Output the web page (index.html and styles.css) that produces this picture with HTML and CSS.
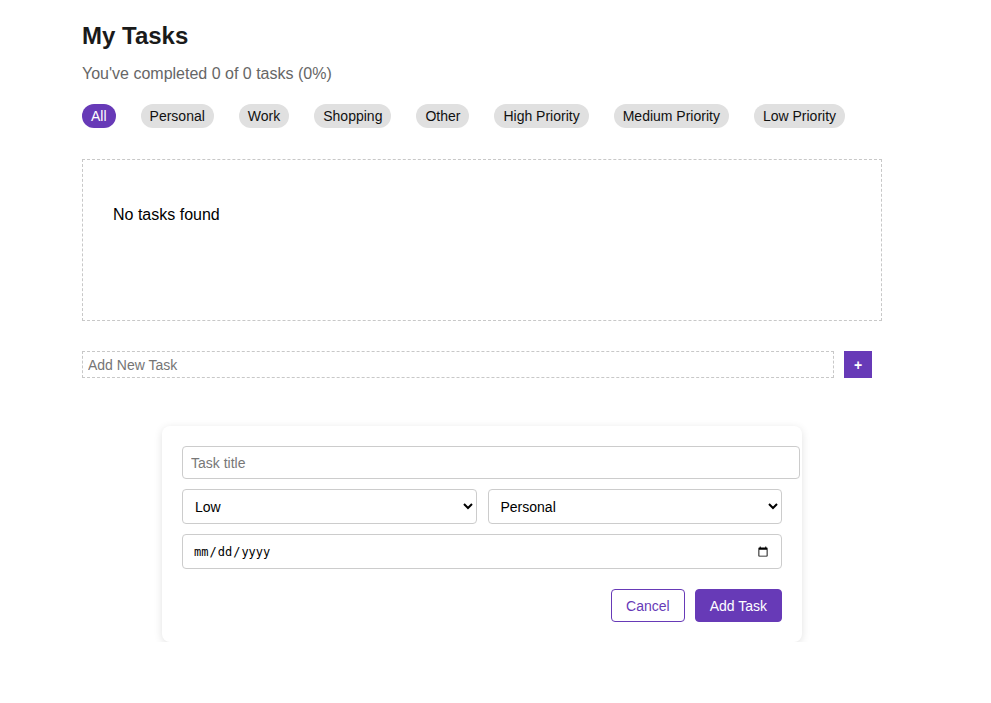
FILE: index.html
```html
<!DOCTYPE html>
<html lang="en">
<head>
<meta charset="utf-8">
<title>My Tasks</title>
<link rel="stylesheet" href="styles.css">
</head>
<body>
<div class="app">
  <h1 class="title">My Tasks</h1>
  <p class="summary">You've completed 0 of 0 tasks (0%)</p>
  <div class="filters">
    <button class="chip active">All</button>
    <button class="chip">Personal</button>
    <button class="chip">Work</button>
    <button class="chip">Shopping</button>
    <button class="chip">Other</button>
    <button class="chip">High Priority</button>
    <button class="chip">Medium Priority</button>
    <button class="chip">Low Priority</button>
  </div>
  <div class="task-list">
    <p class="empty">No tasks found</p>
  </div>
  <div class="add-row">
    <input class="add-input" type="text" placeholder="Add New Task">
    <button class="add-btn">+</button>
  </div>
  <div class="form-card">
    <input class="title-input" type="text" placeholder="Task title">
    <div class="select-row">
      <select class="field">
        <option>Low</option>
        <option>Medium</option>
        <option>High</option>
      </select>
      <select class="field">
        <option>Personal</option>
        <option>Work</option>
        <option>Shopping</option>
        <option>Other</option>
      </select>
    </div>
    <input class="field date-field" type="date">
    <div class="actions">
      <button class="btn btn-outline">Cancel</button>
      <button class="btn btn-primary">Add Task</button>
    </div>
  </div>
</div>
</body>
</html>
```

FILE: styles.css
```css
* { box-sizing: border-box; }
body {
  margin: 0;
  font-family: "Liberation Sans", Arial, sans-serif;
  color: #111;
  background: #fff;
}
.app {
  width: 800px;
  margin-left: 82px;
  padding-top: 22px;
}
.title {
  margin: 0;
  font-size: 24px;
  line-height: 28px;
  font-weight: 700;
  color: #1a1a1a;
}
.summary {
  margin: 15px 0 0;
  font-size: 16px;
  line-height: 18px;
  color: #666;
}
.filters {
  display: flex;
  gap: 25px;
  margin-top: 21px;
}
.chip {
  font-family: "Liberation Sans", Arial, sans-serif;
  font-size: 14px;
  line-height: 16px;
  padding: 4px 9px;
  border: 0;
  border-radius: 12px;
  background: #e0e0e0;
  color: #111;
}
.chip.active {
  background: #673ab7;
  color: #fff;
}
.task-list {
  margin-top: 31px;
  border: 1px dashed #c8c8c8;
  padding: 30px;
  height: 162px;
}
.empty {
  margin: 16px 0 0;
  font-size: 16px;
  line-height: 18px;
  color: #000;
}
.add-row {
  display: flex;
  gap: 10px;
  margin-top: 30px;
  width: 790px;
}
.add-input {
  flex: 1;
  height: 27px;
  border: 1px dashed #c8c8c8;
  padding: 0 5px;
  font-family: "Liberation Sans", Arial, sans-serif;
  font-size: 14px;
  outline: none;
}
.add-input::placeholder { color: #757575; }
.add-btn {
  width: 28px;
  height: 27px;
  border: 0;
  padding: 0;
  background: #673ab7;
  color: #fff;
  font-size: 14px;
  font-weight: 700;
  font-family: "Liberation Sans", Arial, sans-serif;
}
.form-card {
  width: 640px;
  margin: 48px 0 0 80px;
  padding: 20px;
  background: #fff;
  border-radius: 8px;
  box-shadow: 0 2px 8px rgba(0, 0, 0, 0.12);
}
.title-input {
  box-sizing: content-box;
  display: block;
  width: 600px;
  height: 17px;
  padding: 7px 8px;
  border: 1px solid #ccc;
  border-radius: 4px;
  font-family: "Liberation Sans", Arial, sans-serif;
  font-size: 14px;
}
.title-input::placeholder { color: #777; }
.select-row {
  display: flex;
  gap: 11px;
  margin-top: 10px;
}
.field {
  width: 100%;
  height: 35px;
  padding: 0 8px;
  border: 1px solid #ccc;
  border-radius: 4px;
  background: #fff;
  font-family: "Liberation Sans", Arial, sans-serif;
  font-size: 14px;
  color: #000;
}
.select-row .field { flex: 1; }
.date-field {
  display: block;
  margin-top: 10px;
  font-family: "DejaVu Sans Mono", monospace;
  font-size: 12px;
  padding: 0 10px;
}
.actions {
  display: flex;
  justify-content: flex-end;
  gap: 10px;
  margin-top: 20px;
}
.btn {
  height: 33px;
  padding: 0 14px;
  border-radius: 4px;
  font-family: "Liberation Sans", Arial, sans-serif;
  font-size: 14px;
}
.btn-outline {
  background: #fff;
  color: #673ab7;
  border: 1px solid #673ab7;
}
.btn-primary {
  background: #673ab7;
  color: #fff;
  border: 1px solid #673ab7;
}
```
